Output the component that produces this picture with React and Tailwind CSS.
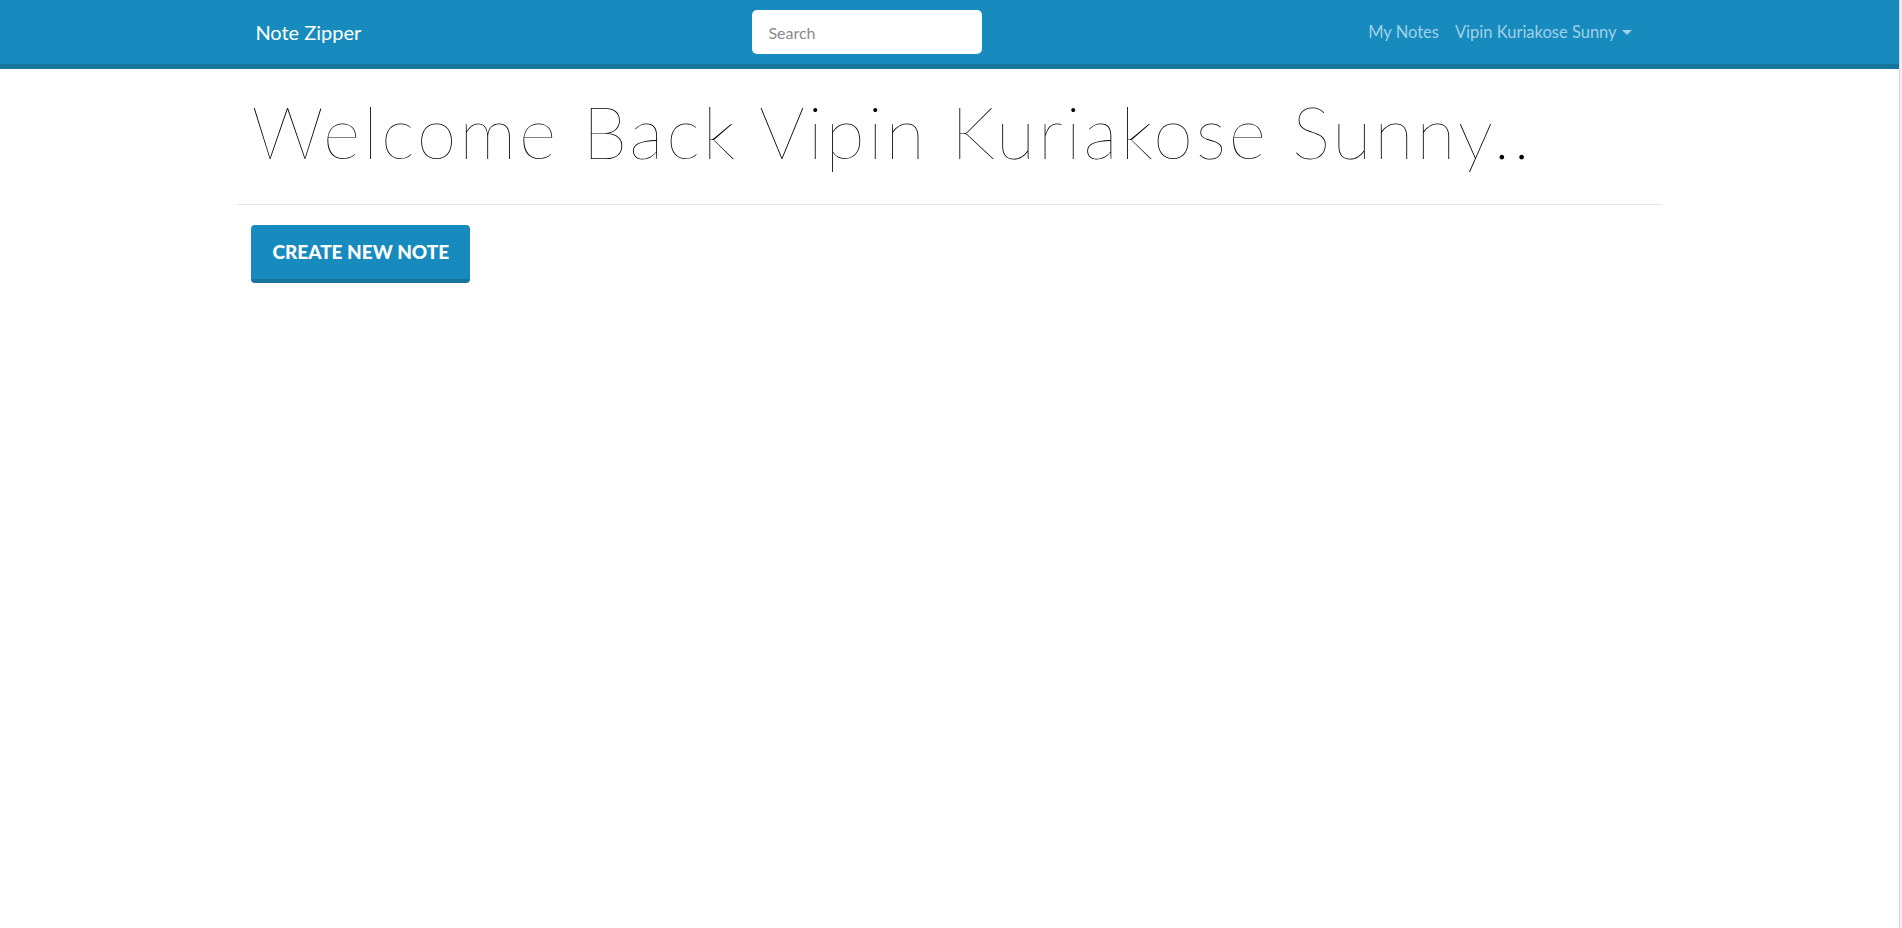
import React from "react";

const Header = () => (
  <nav className="bg-[#178bbd] border-b-[5px] border-[#15759f]">
    <div className="w-[75%] mx-auto h-[64px] flex items-center pl-[18px] pr-5 font-['Lato',sans-serif]">
      <a href="#" className="text-white text-[20px] w-[497px]">Note Zipper</a>
      <input
        type="text"
        placeholder="Search"
        className="w-[230px] h-[44px] rounded-[5px] bg-white px-4 text-[16px] text-gray-700 placeholder:text-[#8a8a8a] outline-none"
      />
      <div className="ml-auto flex items-center gap-[16px] text-[#9fd0e8] text-[16.5px] pr-[10px]">
        <a href="#">My Notes</a>
        <a href="#" className="flex items-center">
          Vipin Kuriakose Sunny
          <span className="ml-[5px] border-x-[5px] border-x-transparent border-t-[5px] border-t-[#9fd0e8]" />
        </a>
      </div>
    </div>
  </nav>
);

const App = () => {
  return (
    <div className="min-h-screen flex bg-white">
      <div className="flex-1">
        <Header />
        <main className="w-[75%] mx-auto">
          <div className="px-[14px] pt-[19px] pb-[30px] border-b border-[#e5e5e5]">
            <h1 className="font-['Lato',sans-serif] font-extralight text-[72px] leading-[86px] tracking-[2.9px] text-black">
              Welcome Back Vipin Kuriakose Sunny..
            </h1>
          </div>
          <div className="px-[14px] pt-[20px]">
            <button className="h-[58px] px-[21px] bg-[#178bbd] border-b-[4px] border-[#15759f] rounded-[4px] text-white font-['Lato',sans-serif] font-black text-[19px] uppercase">
              Create New Note
            </button>
          </div>
        </main>
      </div>
      <div className="w-[3px] bg-[#f1f1f1] border-l border-[#d6d6d6]" />
    </div>
  );
};

export default App;
